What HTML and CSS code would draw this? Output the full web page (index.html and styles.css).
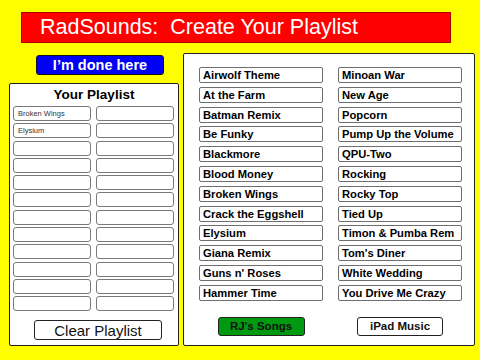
FILE: index.html
```html
<!doctype html>
<html lang="en">
  <head>
    <meta charset="utf-8">
    <title>RadSounds: Create Your Playlist</title>
    <link rel="stylesheet" href="styles.css">
  </head>
  <body>
    <h1 class="banner">RadSounds:&nbsp; Create Your Playlist</h1>
    <div class="main">
      <div class="left">
        <button class="done">I’m done here</button>
        <div class="panel playlist">
          <h2 class="playlist-title">Your Playlist</h2>
          <div class="slots">
            <div class="slot">Broken Wings</div><div class="slot"></div>
            <div class="slot">Elysium</div><div class="slot"></div>
            <div class="slot"></div><div class="slot"></div>
            <div class="slot"></div><div class="slot"></div>
            <div class="slot"></div><div class="slot"></div>
            <div class="slot"></div><div class="slot"></div>
            <div class="slot"></div><div class="slot"></div>
            <div class="slot"></div><div class="slot"></div>
            <div class="slot"></div><div class="slot"></div>
            <div class="slot"></div><div class="slot"></div>
            <div class="slot"></div><div class="slot"></div>
            <div class="slot"></div><div class="slot"></div>
          </div>
          <button class="clear">Clear Playlist</button>
        </div>
      </div>
      <div class="panel library">
        <div class="songs">
          <div class="song">Airwolf Theme</div><div class="song">Minoan War</div>
          <div class="song">At the Farm</div><div class="song">New Age</div>
          <div class="song">Batman Remix</div><div class="song">Popcorn</div>
          <div class="song">Be Funky</div><div class="song">Pump Up the Volume</div>
          <div class="song">Blackmore</div><div class="song">QPU-Two</div>
          <div class="song">Blood Money</div><div class="song">Rocking</div>
          <div class="song">Broken Wings</div><div class="song">Rocky Top</div>
          <div class="song">Crack the Eggshell</div><div class="song">Tied Up</div>
          <div class="song">Elysium</div><div class="song">Timon &amp; Pumba Rem</div>
          <div class="song">Giana Remix</div><div class="song">Tom's Diner</div>
          <div class="song">Guns n' Roses</div><div class="song">White Wedding</div>
          <div class="song">Hammer Time</div><div class="song">You Drive Me Crazy</div>
        </div>
        <div class="sources">
          <button class="source rj">RJ's Songs</button>
          <button class="source ipad">iPad Music</button>
        </div>
      </div>
    </div>
  </body>
</html>
```

FILE: styles.css
```css
*, *::before, *::after {
    box-sizing: border-box;
}

body {
    margin: 0;
    width: 480px;
    height: 360px;
    overflow: hidden;
    background: #ffff00;
    font-family: "Liberation Sans", Arial, sans-serif;
}

button {
    font-family: inherit;
    padding: 0;
    cursor: pointer;
}

.banner {
    margin: 12px 0 0 21px;
    width: 430px;
    height: 31px;
    padding-left: 18px;
    background: #ff0000;
    border: 1px solid #b00000;
    color: #fff;
    font-size: 21.5px;
    font-weight: normal;
    line-height: 29px;
}

.main {
    display: flex;
    align-items: flex-start;
    gap: 4px;
    margin-top: 10px;
    padding-left: 9px;
}

.left {
    width: 170px;
    padding-top: 2px;
}

.done {
    display: block;
    margin-left: 27px;
    width: 128px;
    height: 20px;
    background: #0000f4;
    border: 1px solid #111;
    border-radius: 3px;
    color: #fff;
    font-size: 14.5px;
    font-weight: bold;
}

.panel {
    background: #fff;
    border: 1px solid #222;
    border-radius: 2px;
}

.playlist {
    margin-top: 8px;
    height: 263px;
}

.playlist-title {
    margin: 0;
    height: 22px;
    font-size: 13.5px;
    line-height: 22px;
    text-align: center;
}

.slots {
    display: grid;
    grid-template-columns: 78px 78px;
    grid-auto-rows: 15px;
    column-gap: 5px;
    row-gap: 2.3px;
    padding-left: 3px;
}

.slot {
    border: 1px solid #7a7a7a;
    border-radius: 3px;
    padding-left: 4px;
    color: #333;
    font-size: 7.5px;
    line-height: 13px;
}

.clear {
    display: block;
    margin: 9px 0 0 24px;
    width: 128px;
    height: 20px;
    background: #fff;
    border: 1px solid #222;
    border-radius: 3px;
    font-size: 15px;
    color: #111;
}

.library {
    width: 292px;
    height: 293px;
    padding: 13px 0 0 15px;
}

.songs,
.sources {
    display: grid;
    grid-template-columns: 124px 124px;
    column-gap: 15px;
}

.songs {
    grid-auto-rows: 16px;
    row-gap: 3.8px;
}

.song {
    border: 1px solid #6e6e6e;
    border-radius: 2px;
    padding-left: 3px;
    font-size: 11.2px;
    font-weight: bold;
    line-height: 14px;
    white-space: nowrap;
    overflow: hidden;
}

.sources {
    margin-top: 16px;
    justify-items: center;
}

.source {
    height: 19px;
    border: 1px solid #222;
    border-radius: 3px;
    font-size: 11.5px;
    font-weight: bold;
}

.rj {
    width: 87px;
    background: #009a10;
    color: #111;
}

.ipad {
    width: 86px;
    background: #fff;
    color: #111;
}
```
